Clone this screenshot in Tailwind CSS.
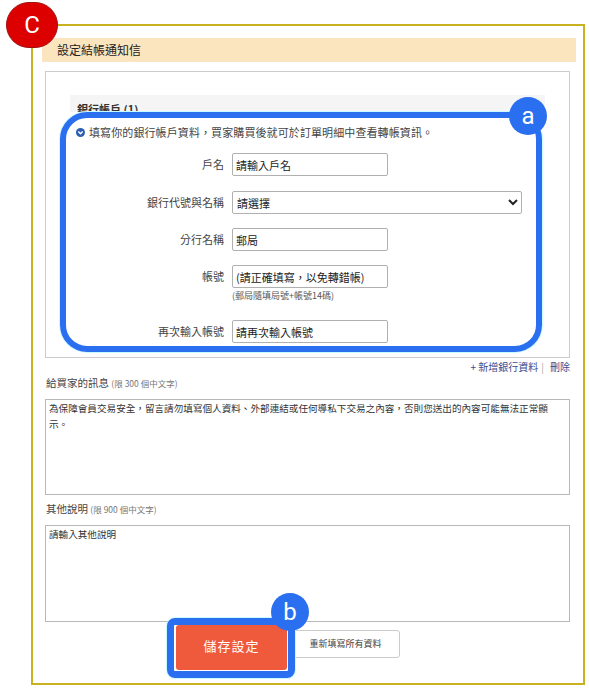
<!DOCTYPE html>
<html lang="zh-Hant">
<head>
  <meta charset="UTF-8">
  <meta name="viewport" content="width=device-width, initial-scale=1.0">
  <title>設定結帳通知信</title>
  <script src="https://cdn.jsdelivr.net/npm/@tailwindcss/browser@4"></script>
</head>
<body class="bg-white">
  <div class="relative w-[589px] h-[689px] overflow-hidden font-['Noto_Sans_CJK_TC',sans-serif] text-[#333]">

    <!-- yellow frame -->
    <div class="absolute left-[31px] top-[24px] w-[554px] h-[661px] border-2 border-[#c9b21f]"></div>

    <div class="pt-[38px] pl-[42px] w-[576px]">
      <div class="w-[534px] h-[24px] bg-[#fbe5bf] pl-[15px] text-[12px] leading-[24px] text-[#222]">設定結帳通知信</div>

      <div class="ml-[3px] w-[525px]">
        <div class="mt-[9px] h-[287px] border border-[#ccc] pt-[23px]">
          <div class="ml-[24px] w-[475px] h-[17px] overflow-hidden bg-[#f5f5f5] pl-[7px] text-[11px] font-bold leading-[28px] text-[#333]">銀行帳戶 (1)</div>

          <div class="mt-[12px] ml-[30px] flex h-[16px] items-center gap-[4px] text-[11px] tracking-[0.1px] text-[#444]">
            <svg width="9" height="9" viewBox="0 0 10 10"><circle cx="5" cy="5" r="5" fill="#2d5fb0"/><path d="M2.6 4 5 6.4 7.4 4" fill="none" stroke="#fff" stroke-width="1.5"/></svg>
            <span>填寫你的銀行帳戶資料，買家購買後就可於訂單明細中查看轉帳資訊。</span>
          </div>

          <div class="mt-[13px] flex items-center gap-2">
            <label class="w-[178px] text-right text-[11px] text-[#444]">戶名</label>
            <input type="text" value="請輸入戶名" class="w-[156px] h-[23px] rounded-[2px] border border-[#b0b0b0] px-[3px] text-[11px] text-[#222]">
          </div>
          <div class="mt-[15px] flex items-center gap-2">
            <label class="w-[178px] text-right text-[11px] text-[#444]">銀行代號與名稱</label>
            <select class="w-[290px] h-[23px] rounded-[2px] border border-[#b0b0b0] bg-white text-[11px] text-[#222]">
              <option>請選擇</option>
            </select>
          </div>
          <div class="mt-[14px] flex items-center gap-2">
            <label class="w-[178px] text-right text-[11px] text-[#444]">分行名稱</label>
            <input type="text" value="郵局" class="w-[156px] h-[23px] rounded-[2px] border border-[#b0b0b0] px-[3px] text-[11px] text-[#222]">
          </div>
          <div class="mt-[14px] flex items-center gap-2">
            <label class="w-[178px] text-right text-[11px] text-[#444]">帳號</label>
            <input type="text" value="(請正確填寫，以免轉錯帳)" class="w-[156px] h-[23px] rounded-[2px] border border-[#b0b0b0] px-[3px] text-[11px] text-[#222]">
          </div>
          <div class="mt-[1px] ml-[186px] h-[13px] text-[9px] leading-[13px] text-[#555]">(郵局隨填局號+帳號14碼)</div>
          <div class="mt-[18px] flex items-center gap-2">
            <label class="w-[178px] text-right text-[11px] text-[#444]">再次輸入帳號</label>
            <input type="text" value="請再次輸入帳號" class="w-[156px] h-[23px] rounded-[2px] border border-[#b0b0b0] px-[3px] text-[11px] text-[#222]">
          </div>
        </div>

        <div class="mt-[2px] flex h-[14px] justify-end text-[10px] leading-[14px] text-[#3c4b8f]">
          <span>+ 新增銀行資料</span><span class="ml-[3px] mr-[6px] text-[#aaa]">|</span><span>刪除</span>
        </div>

        <div class="mt-[2px] h-[14px] pl-[1px] text-[10.5px] leading-[14px] text-[#444]">給買家的訊息 <span class="text-[8.5px] text-[#777]">(限 300 個中文字)</span></div>
        <textarea class="mt-[9px] block w-[525px] h-[96px] resize-none border border-[#b8b8b8] px-[3px] py-0 text-[9.6px] leading-[16px] text-[#333]">為保障會員交易安全，留言請勿填寫個人資料、外部連結或任何導私下交易之內容，否則您送出的內容可能無法正常顯示。</textarea>

        <div class="mt-[7px] h-[14px] pl-[1px] text-[10.5px] leading-[14px] text-[#444]">其他說明 <span class="text-[8.5px] text-[#777]">(限 900 個中文字)</span></div>
        <textarea class="mt-[9px] block w-[525px] h-[97px] resize-none border border-[#b8b8b8] px-[3px] py-0 text-[9.6px] leading-[16px] text-[#333]">請輸入其他說明</textarea>

        <div class="mt-[3px] ml-[131px] flex items-start gap-[4px]">
          <button class="w-[111px] h-[45px] rounded-[3px] bg-[#f05a3c] pb-[3px] text-[13px] tracking-[1px] text-white">儲存設定</button>
          <button class="mt-[5px] w-[109px] h-[28px] rounded-[3px] border border-[#ccc] bg-white text-[9px] text-[#444]">重新填寫所有資料</button>
        </div>
      </div>
    </div>

    <!-- annotations -->
    <div class="absolute left-[60px] top-[112px] w-[482px] h-[240px] rounded-[27px] border-[6px] border-[#2a6ff0] shadow-[0_0_0_1px_#c8fbff]"></div>
    <div class="absolute left-[509px] top-[97px] flex w-[38px] h-[38px] items-center justify-center rounded-full bg-[#2a6ff0] font-['Roboto',sans-serif] text-[24px] leading-none text-white">a</div>

    <div class="absolute left-[167px] top-[618px] w-[128px] h-[60px] rounded-[8px] border-[7px] border-[#2a6ff0] shadow-[0_0_0_1px_#c8fbff]"></div>
    <div class="absolute left-[271px] top-[593px] flex w-[38px] h-[38px] items-center justify-center rounded-full bg-[#2a6ff0] font-['Roboto',sans-serif] text-[24px] leading-none text-white">b</div>

    <div class="absolute left-[6px] top-[2px] flex w-[52px] h-[46px] items-center justify-center rounded-full border border-[#a01010] bg-[#dd0000] font-['Roboto',sans-serif] text-[24px] leading-none text-white">C</div>
  </div>
</body>
</html>
